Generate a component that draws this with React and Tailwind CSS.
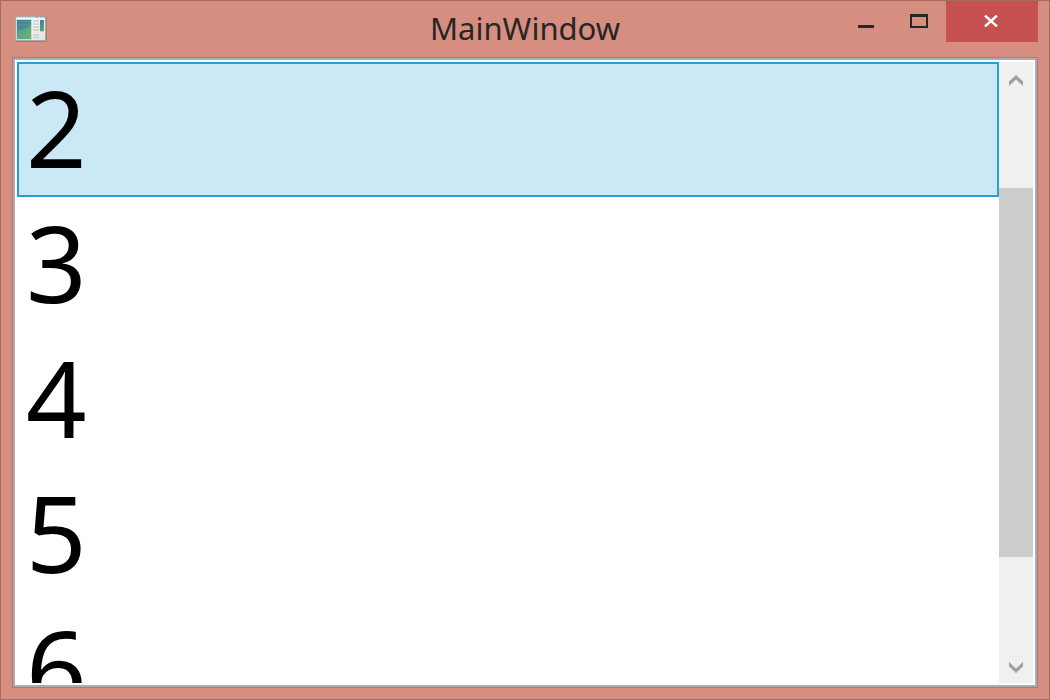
import React, { useState } from "react";

const items = [2, 3, 4, 5, 6];

function AppIcon() {
  return (
    <svg width="32" height="26" viewBox="0 0 32 26" aria-hidden="true">
      <defs>
        <linearGradient id="pane" x1="0" y1="0" x2="0.4" y2="1">
          <stop offset="0" stopColor="#4577a6" />
          <stop offset="0.5" stopColor="#48918f" />
          <stop offset="1" stopColor="#55a672" />
        </linearGradient>
        <linearGradient id="glow" x1="0" y1="0" x2="1" y2="1">
          <stop offset="0" stopColor="#5aa68c" />
          <stop offset="1" stopColor="#6dc070" />
        </linearGradient>
        <linearGradient id="sheet" x1="0" y1="0" x2="1" y2="1">
          <stop offset="0" stopColor="#ffffff" />
          <stop offset="1" stopColor="#e2e2e2" />
        </linearGradient>
      </defs>
      <rect x="1" y="1" width="31" height="25" fill="#9b6762" opacity="0.6" />
      <rect x="0.5" y="0.5" width="30" height="24" fill="url(#sheet)" stroke="#a5a9ae" />
      <rect x="1" y="1" width="29" height="1" fill="#d6dade" />
      <path d="M21 1h2M25 1h1M28 1h2" stroke="#8b8f94" />
      <rect x="1.5" y="3.5" width="15" height="20" fill="#fff" stroke="#d3d6d8" />
      <rect x="2" y="4" width="14" height="19" fill="url(#pane)" />
      <path d="M2 15C7 14 13 12 16 9V23H2Z" fill="url(#glow)" opacity="0.6" />
      <path d="M3 5.5h12M3 8.5h12" stroke="#6ba0b5" opacity="0.4" />
      <path d="M18 5h6M18 8h6M18 11h6M18 14h6M18 19h6M18 21.5h6" stroke="#cbcdce" strokeWidth="1.6" />
      <rect x="25" y="4" width="4" height="11" fill="url(#pane)" />
      <rect x="25" y="15" width="4" height="1" fill="#b9d3c2" />
    </svg>
  );
}

function Chevron({ down = false }) {
  return (
    <svg width="14" height="12" viewBox="0 0 14 12" aria-hidden="true">
      <path
        d={down ? "M0 0L7 6.5L14 0V4.5L7 11L0 4.5Z" : "M0 11L7 4.5L14 11V6.5L7 0L0 6.5Z"}
        fill="#a0a0a0"
      />
    </svg>
  );
}

function TitleBar() {
  return (
    <header className="grid h-14 shrink-0 grid-cols-[1fr_auto_1fr] items-start px-[11px]">
      <div className="pt-[15px] pl-[3px]">
        <AppIcon />
      </div>
      <h1 className="pt-[7px] text-[31px] leading-10 text-[#262626]">MainWindow</h1>
      <div className="flex h-[41px] justify-end">
        <button type="button" aria-label="Minimize" className="flex w-[54px] items-center justify-center pb-px">
          <svg width="18" height="14" viewBox="0 0 18 14" aria-hidden="true">
            <rect x="2" y="11" width="16" height="3" fill="#262626" />
          </svg>
        </button>
        <button type="button" aria-label="Maximize" className="flex w-[54px] items-center justify-center pb-px">
          <svg width="18" height="14" viewBox="0 0 18 14" aria-hidden="true">
            <path d="M0 0H18V14H0ZM2 3V12H16V3Z" fill="#262626" fillRule="evenodd" />
          </svg>
        </button>
        <button type="button" aria-label="Close" className="flex w-[92px] items-center justify-center bg-[#c75050] pb-px">
          <svg width="16" height="12" viewBox="0 0 16 12" aria-hidden="true">
            <path d="M1 0.5L13 11.5M13 0.5L1 11.5" stroke="#fff" strokeWidth="2.4" />
          </svg>
        </button>
      </div>
    </header>
  );
}

function ScrollBar() {
  return (
    <div className="flex w-[34px] shrink-0 flex-col bg-[#f0f0f0]">
      <button type="button" aria-label="Scroll up" className="flex h-[34px] shrink-0 items-center justify-center pt-1">
        <Chevron />
      </button>
      <div className="flex-1" />
      <div className="flex-4 bg-[#cdcdcd]" />
      <div className="flex-1" />
      <button type="button" aria-label="Scroll down" className="flex h-[34px] shrink-0 items-center justify-center pt-1">
        <Chevron down />
      </button>
    </div>
  );
}

export default function App() {
  const [selected, setSelected] = useState(2);
  return (
    <div className="flex h-screen flex-col border border-[#a56b62] bg-[#d68e81] font-['Noto_Sans','Open_Sans',sans-serif]">
      <TitleBar />
      <main className="mx-[11px] mb-[11px] flex min-h-0 flex-1 border border-[#b5766d]">
        <div className="flex min-w-0 flex-1 border-2 border-[#abadb3] bg-white p-0.5">
          <div role="listbox" aria-label="Numbers" className="min-w-0 flex-1 overflow-hidden">
            {items.map((n) => (
              <button
                key={n}
                type="button"
                role="option"
                aria-selected={n === selected}
                onClick={() => setSelected(n)}
                className={
                  n === selected
                    ? "flex h-[135px] w-full items-start border-2 border-[#26a0da] bg-[#cbe8f6] px-[7px] text-[106px] leading-[127px] text-black"
                    : "flex h-[135px] w-full items-start border-2 border-transparent px-[7px] text-[106px] leading-[127px] text-black"
                }
              >
                {n}
              </button>
            ))}
          </div>
          <ScrollBar />
        </div>
      </main>
    </div>
  );
}
